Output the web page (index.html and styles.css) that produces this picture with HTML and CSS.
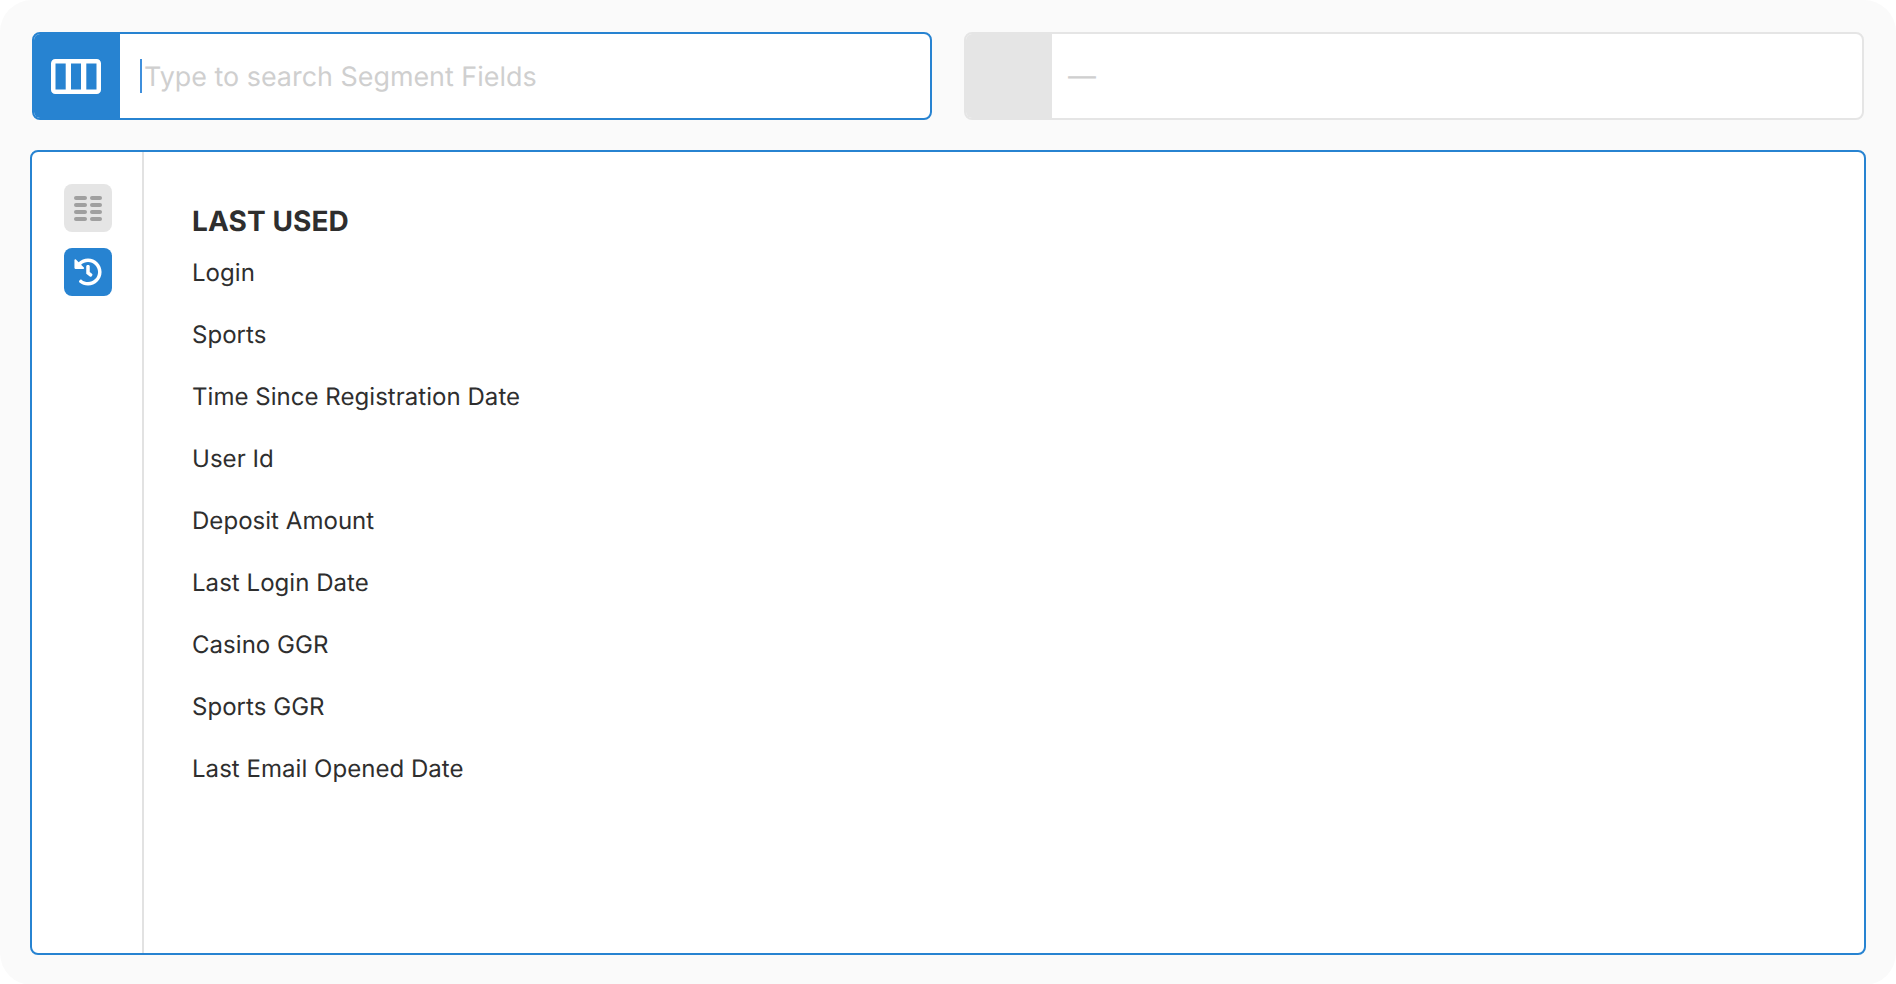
FILE: index.html
```html
<!DOCTYPE html>
<html lang="en">
<head>
<meta charset="utf-8">
<title>Segment Fields</title>
<link rel="stylesheet" href="styles.css">
</head>
<body>
<div class="shell">
  <div class="search-row">
    <div class="field field-active">
      <div class="field-icon">
        <svg class="columns-icon" width="50" height="35" viewBox="0 0 50 35"><rect x="2.25" y="2.25" width="45.5" height="30.5" rx="2" fill="none" stroke="#fff" stroke-width="4.5"/><rect x="14.7" y="1" width="5.3" height="33" fill="#fff"/><rect x="30" y="1" width="5.3" height="33" fill="#fff"/></svg>
      </div>
      <div class="field-body">
        <span class="caret"></span><span class="placeholder">Type to search Segment Fields</span>
      </div>
    </div>
    <div class="field field-off">
      <div class="field-icon"></div>
      <div class="field-body"><span class="dash">—</span></div>
    </div>
  </div>
  <div class="panel">
    <div class="rail">
      <div class="rail-btn rail-off">
        <svg width="28" height="25" viewBox="0 0 28 25" fill="#a0a0a0"><rect x="0" y="0" width="13" height="4" rx="2"/><rect x="16" y="0" width="12" height="4" rx="2"/><rect x="0" y="7" width="13" height="4" rx="2"/><rect x="16" y="7" width="12" height="4" rx="2"/><rect x="0" y="14" width="13" height="4" rx="2"/><rect x="16" y="14" width="12" height="4" rx="2"/><rect x="0" y="21" width="13" height="4" rx="2"/><rect x="16" y="21" width="12" height="4" rx="2"/></svg>
      </div>
      <div class="rail-btn rail-on">
        <svg width="28" height="28" viewBox="0 0 512 512" fill="#fff"><path d="M504 255.531c.253 136.64-111.18 248.372-247.82 248.468-59.015.042-113.223-20.53-155.822-54.911-11.077-8.94-11.905-25.541-1.839-35.607l11.267-11.267c8.609-8.609 22.353-9.551 31.891-1.984C173.062 425.135 212.781 440 256 440c101.705 0 184-82.311 184-184 0-101.705-82.311-184-184-184-48.814 0-93.149 18.969-126.068 49.932l50.754 50.754c10.08 10.08 2.941 27.314-11.313 27.314H24c-8.837 0-16-7.163-16-16V38.627c0-14.254 17.234-21.393 27.314-11.314l49.372 49.372C129.209 34.136 189.552 8 256 8c136.81 0 247.747 110.78 248 247.531zm-180.912 78.784l9.823-12.63c8.138-10.463 6.253-25.542-4.21-33.679L288 256.349V152c0-13.255-10.745-24-24-24h-16c-13.255 0-24 10.745-24 24v135.651l65.409 50.874c10.463 8.137 25.541 6.253 33.679-4.21z"/></svg>
      </div>
    </div>
    <div class="content">
      <h2 class="heading">LAST USED</h2>
      <ul class="list">
        <li>Login</li>
        <li>Sports</li>
        <li>Time Since Registration Date</li>
        <li>User Id</li>
        <li>Deposit Amount</li>
        <li>Last Login Date</li>
        <li>Casino GGR</li>
        <li>Sports GGR</li>
        <li>Last Email Opened Date</li>
      </ul>
    </div>
  </div>
</div>
</body>
</html>
```
FILE: styles.css
```css
html, body { margin: 0; padding: 0; background: #fff; }
body { width: 1896px; height: 984px; overflow: hidden; font-family: Inter, "Liberation Sans", sans-serif; color: #2e2e2e; text-rendering: geometricPrecision; }
.shell { width: 1896px; height: 985px; box-sizing: border-box; background: #fafafa; border-radius: 32px; padding: 32px 30px 30px; display: flex; flex-direction: column; gap: 30px; }
.search-row { display: flex; gap: 32px; padding: 0 2px; height: 88px; }
.field { flex: 1; display: flex; box-sizing: border-box; border: 2px solid; border-radius: 8px; background: #fff; overflow: hidden; }
.field-active { border-color: #2783d1; }
.field-off { border-color: #e5e5e5; }
.field-icon { width: 86px; flex: none; display: flex; align-items: center; justify-content: center; }
.columns-icon { margin-left: -2px; }
.field-active .field-icon { background: #2783d1; }
.field-off .field-icon { background: #e5e5e5; }
.field-body { flex: 1; display: flex; align-items: center; padding-left: 20px; font-size: 28px; }
.caret { width: 2px; height: 34px; background: #3f8fdc; margin-right: 2px; }
.placeholder { color: #cfcfcf; font-size: 26.9px; padding-top: 1px; }
.field-off .field-body { padding-left: 16px; }
.dash { color: #cfcfcf; }
.panel { flex: 1; display: flex; box-sizing: border-box; border: 2px solid #2783d1; border-radius: 8px; background: #fff; }
.rail { width: 78px; flex: none; border-right: 2px solid #e2e2e2; display: flex; flex-direction: column; gap: 16px; padding: 32px 0 0 32px; }
.rail-btn { width: 48px; height: 48px; border-radius: 8px; display: flex; align-items: center; justify-content: center; }
.rail-off { background: #e5e5e5; }
.rail-on { background: #2783d1; }
.content { flex: 1; padding: 52px 48px 0; }
.heading { margin: 0; font-size: 28px; line-height: 34px; font-weight: 700; letter-spacing: 0.1px; }
.list { list-style: none; margin: 20px 0 0; padding: 0; font-size: 24px; line-height: 30px; letter-spacing: 0.04px; display: flex; flex-direction: column; gap: 32px; }
```
